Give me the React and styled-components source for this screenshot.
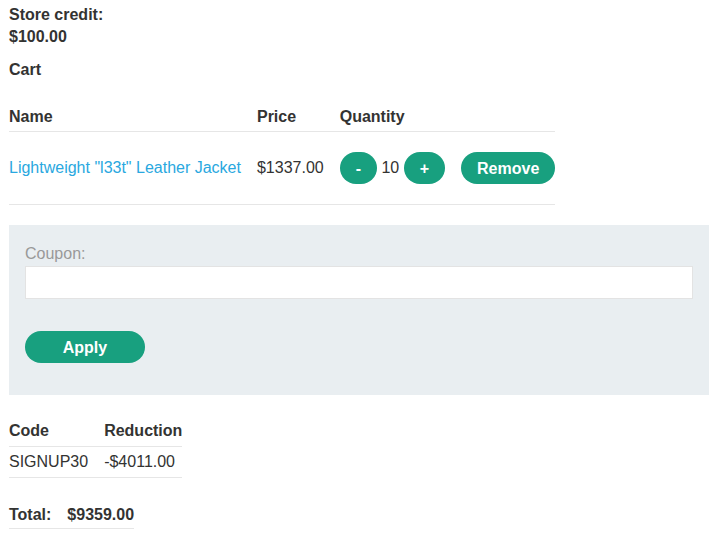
import React from "react";
import styled, { createGlobalStyle } from "styled-components";

const Global = createGlobalStyle`
  html, body { margin: 0; padding: 0; background: #fff; }
  body {
    font-family: "Liberation Sans", Arial, sans-serif;
    font-size: 16px;
    color: #333332;
  }
`;

const Page = styled.div`
  padding: 4px 9px 0 9px;
`;

const Strong = styled.p`
  margin: ${(p) => p.$mt || 0}px 0 0 0;
  font-weight: bold;
  line-height: 22px;
  max-width: ${(p) => p.$max || "none"};
`;

const Table = styled.table`
  border-collapse: collapse;
  margin-top: ${(p) => p.$mt || 0}px;
`;

const Th = styled.th`
  text-align: left;
  font-weight: bold;
  line-height: 18px;
  padding: ${(p) => (p.$even ? "6px 16px 6px 0" : "7px 16px 5px 0")};
  border-bottom: 1px solid #e6e6e6;
  white-space: nowrap;
  &:last-child { padding-right: 0; }
`;

const paddings = {
  tall: "20px 16px 20px 0",
  total: "8px 16px 4px 0",
  normal: "6px 16px 6px 0",
};

const Td = styled.td`
  line-height: 18px;
  padding: ${(p) => paddings[p.$kind || "normal"]};
  border-bottom: 1px solid #e6e6e6;
  white-space: nowrap;
  font-weight: ${(p) => (p.$kind === "total" ? "bold" : "normal")};
  &:last-child { padding-right: 0; }
`;

const Link = styled.a`
  color: #29a8e0;
  text-decoration: none;
`;

const Pill = styled.button`
  display: inline-block;
  box-sizing: border-box;
  height: 32px;
  min-width: ${(p) => p.$w || 0}px;
  padding: 1px 16px 0 16px;
  border: none;
  border-radius: 20px;
  background: #18a07f;
  color: #fff;
  font-family: "Liberation Sans", Arial, sans-serif;
  font-size: 16px;
  font-weight: bold;
  line-height: 31px;
  vertical-align: middle;
  cursor: pointer;
`;

const Qty = styled.span`
  vertical-align: middle;
  line-height: 32px;
`;

const CouponBox = styled.form`
  margin-top: 20px;
  width: 700px;
  box-sizing: border-box;
  background: #e9eef1;
  padding: 20px 16px 32px 16px;
`;

const Label = styled.label`
  display: block;
  color: #999;
  line-height: 18px;
`;

const Input = styled.input`
  display: block;
  box-sizing: border-box;
  width: 100%;
  height: 33px;
  margin: 3px 0 0 0;
  border: 1px solid #e3e3e3;
  background: #fff;
  font-family: inherit;
  font-size: 16px;
`;

const ApplyRow = styled.div`
  margin-top: 32px;
`;

export default function App() {
  return (
    <>
      <Global />
      <Page>
        <Strong $max="120px">Store credit: $100.00</Strong>
        <Strong $mt={11}>Cart</Strong>
        <Table $mt={20}>
          <thead>
            <tr>
              <Th>Name</Th>
              <Th>Price</Th>
              <Th>Quantity</Th>
              <Th></Th>
            </tr>
          </thead>
          <tbody>
            <tr>
              <Td $kind="tall">
                <Link href="#">Lightweight "l33t" Leather Jacket</Link>
              </Td>
              <Td $kind="tall">$1337.00</Td>
              <Td $kind="tall">
                <Pill type="button" $w={37}>-</Pill> <Qty>10</Qty>{" "}
                <Pill type="button" $w={41}>+</Pill>
              </Td>
              <Td $kind="tall">
                <Pill type="button" $w={94}>Remove</Pill>
              </Td>
            </tr>
          </tbody>
        </Table>
        <CouponBox onSubmit={(e) => e.preventDefault()}>
          <Label>Coupon:</Label>
          <Input type="text" />
          <ApplyRow>
            <Pill type="submit" $w={120}>Apply</Pill>
          </ApplyRow>
        </CouponBox>
        <Table $mt={21}>
          <thead>
            <tr>
              <Th $even>Code</Th>
              <Th $even>Reduction</Th>
            </tr>
          </thead>
          <tbody>
            <tr>
              <Td>SIGNUP30</Td>
              <Td>-$4011.00</Td>
            </tr>
          </tbody>
        </Table>
        <Table $mt={20}>
          <tbody>
            <tr>
              <Td $kind="total">Total:</Td>
              <Td $kind="total">$9359.00</Td>
            </tr>
          </tbody>
        </Table>
      </Page>
    </>
  );
}
